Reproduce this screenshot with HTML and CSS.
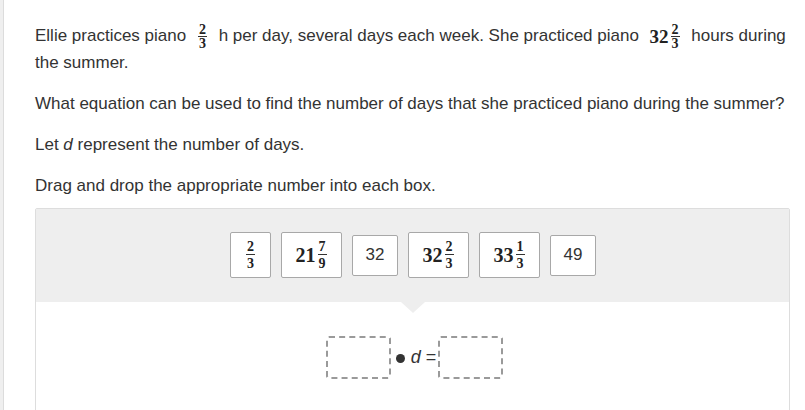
FILE: index.html
```html
<!DOCTYPE html>
<html lang="en">
<head>
<meta charset="utf-8">
<title>Piano practice</title>
<link rel="stylesheet" href="styles.css">
</head>
<body>
<div class="page">
  <p class="para">Ellie practices piano <span class="math"><span class="frac"><span class="num">2</span><span class="den">3</span></span></span> h per day, several days each week. She practiced piano <span class="math"><span class="whole">32</span><span class="frac"><span class="num">2</span><span class="den">3</span></span></span> hours during the summer.</p>
  <p class="para">What equation can be used to find the number of days that she practiced piano during the summer?</p>
  <p class="para">Let <i>d</i> represent the number of days.</p>
  <p class="para last">Drag and drop the appropriate number into each box.</p>

  <div class="panel">
    <div class="bank">
      <div class="tile tile-math tile-small"><span class="frac big"><span class="num">2</span><span class="den">3</span></span></div>
      <div class="tile tile-math"><span class="whole big-whole">21</span><span class="frac big"><span class="num">7</span><span class="den">9</span></span></div>
      <div class="tile tile-text">32</div>
      <div class="tile tile-math"><span class="whole big-whole">32</span><span class="frac big"><span class="num">2</span><span class="den">3</span></span></div>
      <div class="tile tile-math"><span class="whole big-whole">33</span><span class="frac big"><span class="num">1</span><span class="den">3</span></span></div>
      <div class="tile tile-text">49</div>
    </div>
    <div class="equation">
      <div class="drop"></div>
      <span class="dot"></span>
      <span class="var">d</span>
      <span class="eq">=</span>
      <div class="drop"></div>
    </div>
  </div>
</div>
</body>
</html>
```

FILE: styles.css
```css
html, body {
  margin: 0;
  padding: 0;
  background: #ffffff;
}

body {
  font-family: "Liberation Sans", Arial, sans-serif;
  font-size: 17px;
  color: #333333;
}

.page {
  border-left: 3px solid #efefef;
  box-shadow: inset 1px 0 0 #dcdcdc;
  padding: 22px 15px 0 32px;
  min-height: 410px;
  box-sizing: border-box;
}

.para {
  margin: 0 0 14px 0;
  line-height: 27px;
}

.para.last {
  margin-bottom: 0;
}

.para i {
  font-style: italic;
}

.math {
  display: inline-flex;
  align-items: center;
  vertical-align: middle;
  margin: -4px 6px -4px 6px;
  font-family: "Liberation Serif", "DejaVu Serif", serif;
  font-weight: bold;
  color: #222;
  line-height: 1;
}

.whole {
  font-size: 19px;
  line-height: 1;
  margin-right: 1px;
}

.frac {
  display: inline-flex;
  flex-direction: column;
  align-items: center;
  font-size: 14px;
  line-height: 12px;
  padding: 0 1px;
}

.frac .num {
  border-bottom: 1px solid #333;
  padding: 0 1px 0;
}

.frac .den {
  padding-top: 1px;
}

.panel {
  margin-top: 9px;
  border: 1px solid #dddddd;
  border-radius: 2px;
  padding-bottom: 60px;
}

.bank {
  position: relative;
  background: #eeeeee;
  display: flex;
  justify-content: center;
  align-items: center;
  gap: 10px;
  padding: 23px 0 24px 1px;
  margin-bottom: 34px;
}

.bank::after {
  content: "";
  position: absolute;
  left: 50%;
  bottom: -11px;
  margin-left: -12px;
  border-left: 12px solid transparent;
  border-right: 12px solid transparent;
  border-top: 11px solid #eeeeee;
}

.tile {
  background: #ffffff;
  border: 1px solid #a8a8a8;
  border-radius: 2px;
  box-sizing: border-box;
  display: flex;
  align-items: center;
  justify-content: center;
}

.tile-math {
  height: 46px;
  width: 61px;
  font-family: "Liberation Serif", "DejaVu Serif", serif;
  font-weight: bold;
  color: #222;
}

.tile-math.tile-small {
  width: 41px;
}

.big-whole {
  font-size: 20px;
}

.frac.big {
  font-size: 14px;
  line-height: 13px;
}

.frac.big .num {
  padding-bottom: 1px;
}

.frac.big .den {
  padding-top: 2px;
}

.tile-text {
  height: 41px;
  width: 46px;
  font-size: 17px;
  color: #333;
}

.equation {
  display: flex;
  justify-content: center;
  align-items: center;
  padding-left: 4px;
}

.drop {
  width: 65px;
  height: 43px;
  box-sizing: border-box;
  border: 2px dashed #9a9a9a;
  border-radius: 3px;
}

.dot {
  display: inline-block;
  width: 9px;
  height: 9px;
  border-radius: 50%;
  background: #333;
  margin: 2px 6px 0 5px;
}

.var {
  font-style: italic;
  font-size: 18px;
  margin-right: 5px;
}

.eq {
  font-size: 18px;
  margin-right: 2px;
}
```
